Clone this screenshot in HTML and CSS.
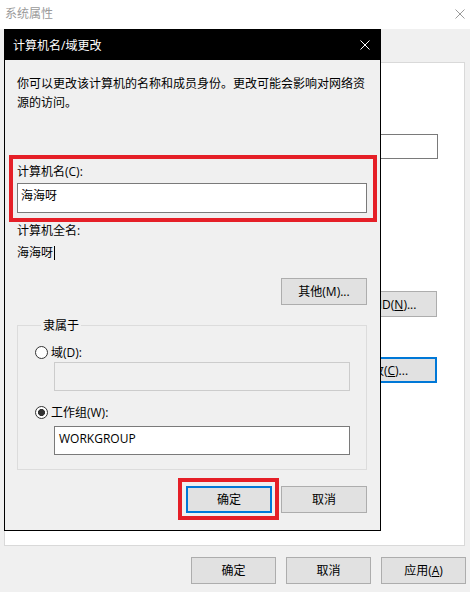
FILE: index.html
```html
<!DOCTYPE html>
<html lang="zh-CN">
<head>
<meta charset="utf-8">
<title>系统属性</title>
<link rel="stylesheet" href="styles.css">
</head>
<body>
<div class="sys">
  <div class="sys-title">
    <span>系统属性</span>
    <svg class="x-icon" width="10" height="10" viewBox="0 0 10 10"><path d="M0.5 0.5L9.5 9.5M9.5 0.5L0.5 9.5" stroke="#9a9a9a" stroke-width="1" fill="none"/></svg>
  </div>
  <div class="sys-tabs"></div>
  <div class="sys-panel">
    <div class="bg-field"></div>
    <button class="btn bg-btn-net">网络 ID(<u>N</u>)...</button>
    <button class="btn btn-default bg-btn-change">更改(<u>C</u>)...</button>
  </div>
  <div class="sys-actions">
    <button class="btn act-btn">确定</button>
    <button class="btn act-btn">取消</button>
    <button class="btn act-btn">应用(<u>A</u>)</button>
  </div>
</div>

<div class="dlg">
  <div class="dlg-title">
    <span>计算机名/域更改</span>
    <svg class="x-icon" width="10" height="10" viewBox="0 0 10 10"><path d="M0.5 0.5L9.5 9.5M9.5 0.5L0.5 9.5" stroke="#ffffff" stroke-width="1" fill="none"/></svg>
  </div>
  <div class="dlg-body">
    <p class="desc">你可以更改该计算机的名称和成员身份。更改可能会影响对网络资源的访问。</p>
    <div class="lbl lbl-name">计算机名(C):</div>
    <div class="field field-name">海海呀</div>
    <div class="lbl lbl-full">计算机全名:</div>
    <div class="full-value">海海呀<span class="caret"></span></div>
    <div class="row-right row-other">
      <button class="btn dlg-btn">其他(M)...</button>
    </div>
    <fieldset class="group">
      <legend>隶属于</legend>
      <div class="radio-row radio-row-1"><span class="radio"></span><span>域(D):</span></div>
      <div class="field field-indent field-disabled"></div>
      <div class="radio-row radio-row-2"><span class="radio radio-on"></span><span>工作组(W):</span></div>
      <div class="field field-indent field-wg">WORKGROUP</div>
    </fieldset>
    <div class="row-right row-actions">
      <button class="btn btn-default dlg-btn">确定</button>
      <button class="btn dlg-btn">取消</button>
    </div>
  </div>
</div>

<div class="mark mark-name"></div>
<div class="mark mark-ok"></div>
</body>
</html>
```

FILE: styles.css
```css
* { box-sizing: border-box; }

html, body {
  margin: 0;
  padding: 0;
}

body {
  width: 470px;
  height: 592px;
  overflow: hidden;
  position: relative;
  background: #f0f0f0;
  font-family: "Open Sans", "Noto Sans CJK SC", sans-serif;
  font-size: 12px;
  line-height: 19px;
  color: #000;
}

/* background window */
.sys {
  display: flex;
  flex-direction: column;
  height: 592px;
}

.sys-title {
  height: 29px;
  background: #fff;
  display: flex;
  align-items: center;
  justify-content: space-between;
  padding: 0 5px 2px 5px;
  color: #9a9a9a;
}

.sys-tabs {
  height: 33px;
}

.sys-panel {
  height: 484px;
  margin: 0 5px 0 4px;
  background: #fff;
  border: 1px solid #d9d9d9;
  display: flex;
  flex-direction: column;
  align-items: flex-end;
  padding-right: 26px;
}

.bg-field {
  margin-top: 71px;
  width: 260px;
  height: 25px;
  border: 1px solid #7a7a7a;
  background: #fff;
}

.btn {
  font: inherit;
  color: #000;
  background: #e1e1e1;
  border: 1px solid #adadad;
  padding: 0;
  margin: 0;
  line-height: 19px;
  text-align: center;
  white-space: nowrap;
}

.btn u { text-decoration: underline; }

.btn-default {
  border: 2px solid #0078d7;
}

.bg-btn-net {
  margin-top: 132px;
  width: 106px;
  height: 26px;
  margin-right: 1px;
}

.bg-btn-change {
  margin-top: 40px;
  width: 106px;
  height: 26px;
  margin-right: 1px;
}

.sys-actions {
  margin-top: 11px;
  display: flex;
  justify-content: flex-end;
  gap: 10px;
  padding-right: 4px;
}

.act-btn {
  width: 85px;
  height: 27px;
}

/* dialog */
.dlg {
  position: absolute;
  left: 4px;
  top: 29px;
  width: 377px;
  height: 502px;
  border: 1px solid #000;
  background: #f0f0f0;
  display: flex;
  flex-direction: column;
}

.dlg-title {
  height: 30px;
  flex: none;
  background: #000;
  color: #fff;
  display: flex;
  align-items: center;
  justify-content: space-between;
  padding: 0 10px 0 8px;
}

.dlg-body {
  padding: 14px 13px 0 12px;
}

.desc {
  margin: 0;
}

.lbl-name { margin-top: 50px; }

.field {
  height: 30px;
  border: 1px solid #7a7a7a;
  background: #fff;
  padding: 2px 3px;
  white-space: nowrap;
}

.field-name { margin-top: 2px; }

.lbl-full { margin-top: 8px; }

.full-value {
  margin-top: 3px;
  display: flex;
  align-items: center;
}

.caret {
  display: inline-block;
  width: 1px;
  height: 14px;
  background: #000;
  margin-left: 1px;
}

.row-right {
  display: flex;
  justify-content: flex-end;
  gap: 9px;
}

.row-other { margin-top: 16px; }

.dlg-btn {
  width: 86px;
  height: 27px;
}

.group {
  margin: 11px 0 0 0;
  padding: 0 16px 14px 17px;
  border: 1px solid #dcdcdc;
  min-width: 0;
}

.group legend {
  padding: 0 2px;
  margin-left: 6px;
  line-height: 19px;
}

.radio-row {
  display: flex;
  align-items: center;
  gap: 3px;
  height: 19px;
}

.radio-row-1 { margin-top: 8px; }
.radio-row-2 { margin-top: 12px; }

.radio {
  width: 13px;
  height: 13px;
  border: 1px solid #333;
  border-radius: 50%;
  background: #fff;
  flex: none;
}

.radio-on {
  background: radial-gradient(circle, #333 0 3.2px, #fff 3.8px);
}

.field-indent {
  margin-left: 19px;
  height: 29px;
}

.field-disabled {
  border-color: #cccccc;
  background: #f0f0f0;
}

.field-wg {
  margin-top: 4px;
  padding-left: 4px;
}

.row-actions { margin-top: 16px; }

/* red annotation boxes */
.mark {
  position: absolute;
  border: 4px solid #e51f27;
}

.mark-name {
  left: 9px;
  top: 155px;
  width: 368px;
  height: 67px;
}

.mark-ok {
  left: 178px;
  top: 478px;
  width: 101px;
  height: 42px;
}
```
